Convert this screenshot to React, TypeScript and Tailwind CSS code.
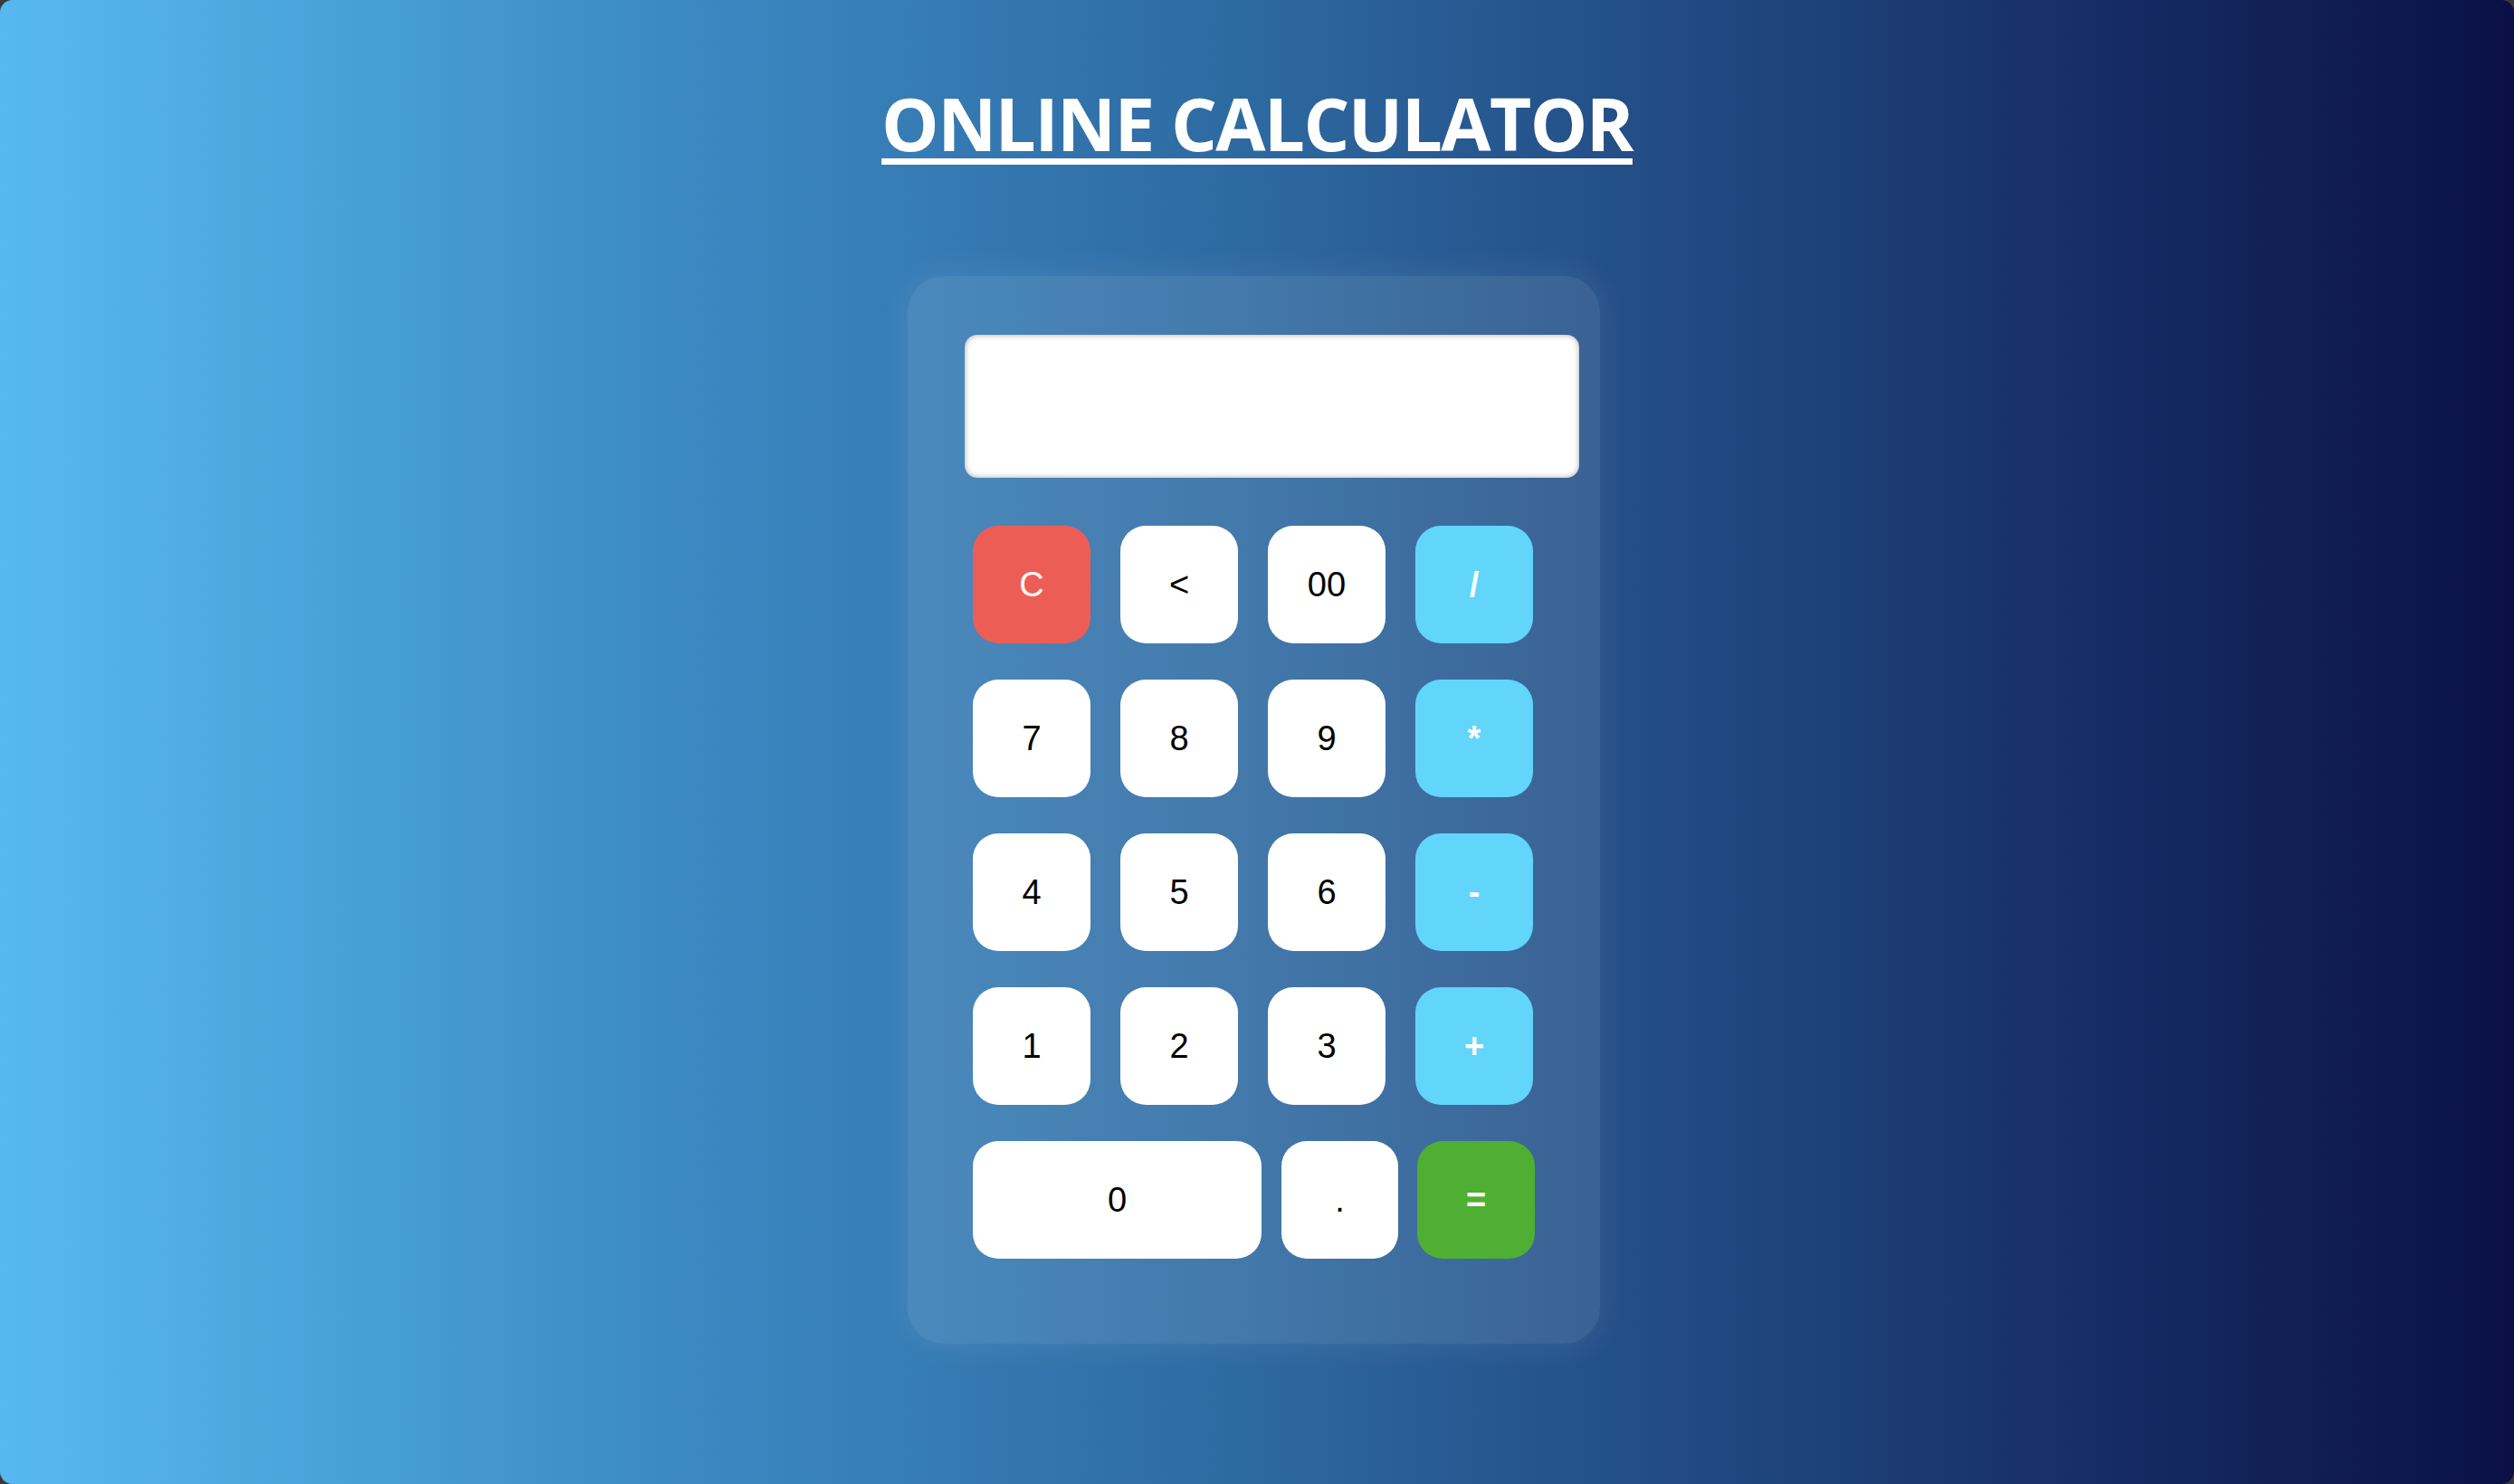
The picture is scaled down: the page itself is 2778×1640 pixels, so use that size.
import React, { useState } from 'react';

const rows: { label: string; kind: 'num' | 'op' | 'clear' }[][] = [
    [
        { label: 'C', kind: 'clear' },
        { label: '<', kind: 'num' },
        { label: '00', kind: 'num' },
        { label: '/', kind: 'op' },
    ],
    [
        { label: '7', kind: 'num' },
        { label: '8', kind: 'num' },
        { label: '9', kind: 'num' },
        { label: '*', kind: 'op' },
    ],
    [
        { label: '4', kind: 'num' },
        { label: '5', kind: 'num' },
        { label: '6', kind: 'num' },
        { label: '-', kind: 'op' },
    ],
    [
        { label: '1', kind: 'num' },
        { label: '2', kind: 'num' },
        { label: '3', kind: 'num' },
        { label: '+', kind: 'op' },
    ],
];

const kindClass = {
    num: 'bg-white text-black font-normal',
    op: 'bg-[#62d5fa] text-white font-bold',
    clear: 'bg-[#ec5e55] text-white font-normal',
};

export default function App() {
    const [value, setValue] = useState('');

    const press = (label: string) => {
        if (label === 'C') return setValue('');
        if (label === '<') return setValue((v) => v.slice(0, -1));
        if (label === '=') {
            try {
                // eslint-disable-next-line no-new-func
                setValue(String(Function(`return (${value})`)()));
            } catch {
                setValue('Error');
            }
            return;
        }
        setValue((v) => v + label);
    };

    return (
        <div className="w-full h-[1640px] bg-[#3a3a3a]">
            <div className="w-full h-full rounded-[14px] overflow-hidden bg-[linear-gradient(to_right,#57b9f0,#3d8cc6_25%,#2e6aa2_49%,#1c3c74_75%,#0a1046)] flex flex-col items-center font-['Liberation_Sans',Arial,sans-serif]">
                {/* Title */}
                <h1 className="mt-[96px] text-white text-[80px] leading-none font-bold tracking-[-0.02em] underline decoration-[7px] underline-offset-[8px] font-['Open_Sans',sans-serif]">
                    ONLINE CALCULATOR
                </h1>

                {/* Calculator body */}
                <div className="mt-[129px] mr-[7px] w-[765px] h-[1180px] rounded-[40px] bg-white/10 shadow-[0_0_30px_10px_rgba(255,255,255,0.06)] pl-[63px] pt-[65px]">
                    <input
                        readOnly
                        value={value}
                        className="block w-[679px] h-[158px] rounded-[14px] bg-white shadow-[inset_0_0_6px_rgba(0,0,0,0.35)] px-6 text-right text-[56px] text-black outline-none"
                    />

                    <div className="mt-[53px] pl-[9px] flex flex-col gap-[40px]">
                        {rows.map((row, i) => (
                            <div key={i} className="flex gap-[33px]">
                                {row.map((b) => (
                                    <button
                                        key={b.label}
                                        onClick={() => press(b.label)}
                                        className={`w-[130px] h-[130px] rounded-[28px] text-[38px] flex items-center justify-center ${kindClass[b.kind]}`}
                                    >
                                        {b.label}
                                    </button>
                                ))}
                            </div>
                        ))}

                        <div className="flex">
                            <button
                                onClick={() => press('0')}
                                className="w-[319px] h-[130px] rounded-[28px] bg-white text-black text-[38px] flex items-center justify-center"
                            >
                                0
                            </button>
                            <button
                                onClick={() => press('.')}
                                className="ml-[22px] w-[129px] h-[130px] rounded-[28px] bg-white text-black text-[38px] flex items-center justify-center"
                            >
                                .
                            </button>
                            <button
                                onClick={() => press('=')}
                                className="ml-[21px] w-[130px] h-[130px] rounded-[28px] bg-[#4faf33] text-white font-bold text-[38px] flex items-center justify-center"
                            >
                                =
                            </button>
                        </div>
                    </div>
                </div>
            </div>
        </div>
    );
}
